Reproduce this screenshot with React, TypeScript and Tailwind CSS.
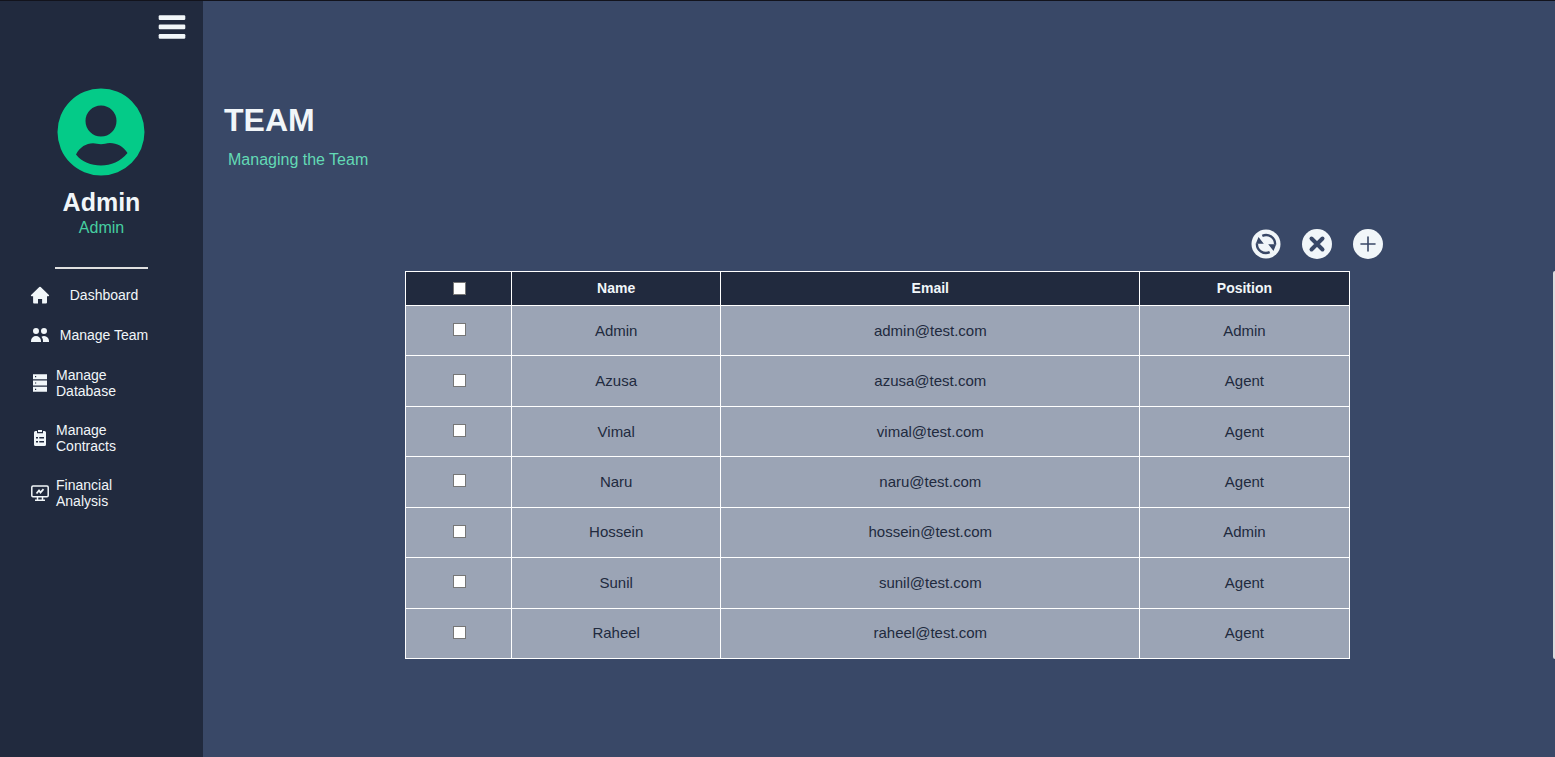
import React from "react";

type Member = { name: string; email: string; position: string };

const members: Member[] = [
  { name: "Admin", email: "admin@test.com", position: "Admin" },
  { name: "Azusa", email: "azusa@test.com", position: "Agent" },
  { name: "Vimal", email: "vimal@test.com", position: "Agent" },
  { name: "Naru", email: "naru@test.com", position: "Agent" },
  { name: "Hossein", email: "hossein@test.com", position: "Admin" },
  { name: "Sunil", email: "sunil@test.com", position: "Agent" },
  { name: "Raheel", email: "raheel@test.com", position: "Agent" },
];

function BarsIcon() {
  return (
    <svg width="28" height="26" viewBox="0 0 28 26" fill="currentColor" aria-hidden="true">
      <rect x=".7" y="1.200" width="26.600" height="4.800" rx="1.200" />
      <rect x=".7" y="10.500" width="26.600" height="4.800" rx="1.200" />
      <rect x=".7" y="20" width="26.600" height="4.800" rx="1.200" />
    </svg>
  );
}

function AvatarIcon() {
  return (
    <svg width="89" height="88" viewBox="0 0 89 88" aria-hidden="true">
      <path
        fill="#04cb88"
        fillRule="evenodd"
        d="M44 .5a43.5 43.5 0 1 0 0 87 43.5 43.5 0 0 0 0-87ZM44 17.500a15.500 15.500 0 1 1 0 31 15.500 15.500 0 0 1 0-31ZM19 66.500C23 59 29 55.500 36 55.300c3 0 5 1 8 1s5-1.300 9-1.300c7 0 13.500 3.500 17.500 10C63.500 73.500 54 77.500 44 77.500S25 74 19 66.500Z"
      />
    </svg>
  );
}

function HomeIcon() {
  return (
    <svg width="20" height="20" viewBox="0 0 20 20" fill="currentColor" aria-hidden="true">
      <path d="M9.300 2a1 1 0 0 1 1.400 0l8.200 8c.5.500.2 1.200-.5 1.200H17v6.300c0 .5-.4.900-.9.900h-4V14H8v4.400H4c-.5 0-.9-.4-.9-.9v-6.300H1.600c-.7 0-1-.7-.5-1.200z" />
    </svg>
  );
}

function UsersIcon() {
  return (
    <svg width="20" height="20" viewBox="0 0 20 20" fill="currentColor" aria-hidden="true">
      <path d="M9 6a3 3 0 1 1-6 0 3 3 0 0 1 6 0zM17 6a3 3 0 1 1-6 0 3 3 0 0 1 6 0zM12.930 17c.046-.327.070-.66.070-1a6.970 6.970 0 0 0-1.500-4.330A5 5 0 0 1 19 16v1h-6.070zM6 11a5 5 0 0 1 5 5v1H1v-1a5 5 0 0 1 5-5z" />
    </svg>
  );
}

function ServerIcon() {
  return (
    <svg width="20" height="20" viewBox="0 0 20 20" fill="currentColor" aria-hidden="true">
      <path
        fillRule="evenodd"
        d="M3 1.200h14v5H3zM5 3v1.200h1.200V3zM3 7.500h14v5H3zM5 9.400v1.200h1.200V9.400zM3 13.800h14v5H3zM5 15.700v1.200h1.200v-1.200z"
      />
    </svg>
  );
}

function ClipboardIcon() {
  return (
    <svg width="20" height="20" viewBox="0 0 20 20" fill="currentColor" aria-hidden="true">
      <path
        fillRule="evenodd"
        d="M5.500 3H7v2.200h6V3h1.500A1.500 1.500 0 0 1 16 4.500v12a1.500 1.500 0 0 1-1.500 1.500h-9A1.500 1.500 0 0 1 4 16.500v-12A1.500 1.500 0 0 1 5.500 3zM6 9v1.500h2V9zM9.300 9v1.500H14V9zM6 13v1.500h2V13zM9.300 13v1.500H14V13z"
      />
      <path d="M8 2h4v2H8z" />
    </svg>
  );
}

function AnalysisIcon() {
  return (
    <svg width="20" height="20" viewBox="0 0 20 20" fill="none" stroke="currentColor" strokeWidth="1.500" aria-hidden="true">
      <rect x="1.800" y="3" width="16.400" height="10.800" rx="1.200" />
      <path d="M7.500 14v3M12.500 14v3M5 17.300h10" />
      <path d="m6.500 10.500 2.500-3 1.500 2 3-3.300" strokeWidth="1.800" />
    </svg>
  );
}

function RefreshIcon() {
  return (
    <svg width="30" height="30" viewBox="0 0 30 30" aria-hidden="true">
      <circle cx="15" cy="15" r="14.500" fill="#f1f6f9" />
      <path
        d="M11.300 6.800A9.100 9.100 0 0 1 24.100 15.500M18.700 23.200A9.100 9.100 0 0 1 5.900 14.500"
        fill="none"
        stroke="#394867"
        strokeWidth="2.400"
      />
      <path d="M7.500 8 12.800 14.700H4.800zM17.200 15.300h8L22.500 22z" fill="#394867" />
    </svg>
  );
}

function CloseIcon() {
  return (
    <svg width="32" height="32" viewBox="0 0 32 32" aria-hidden="true">
      <circle cx="16" cy="16" r="15" fill="#f1f6f9" />
      <path d="m10.500 10.500 11 11m0-11-11 11" stroke="#394867" strokeWidth="4" strokeLinecap="round" />
    </svg>
  );
}

function PlusIcon() {
  return (
    <svg width="30" height="30" viewBox="0 0 30 30" aria-hidden="true">
      <circle cx="15" cy="15" r="15" fill="#f1f6f9" />
      <path d="M15 8v14M8 15h14" stroke="#394867" strokeWidth="1.600" strokeLinecap="round" />
    </svg>
  );
}

const links = [
  { label: "Dashboard", icon: <HomeIcon />, wraps: false },
  { label: "Manage Team", icon: <UsersIcon />, wraps: false },
  { label: "Manage Database", icon: <ServerIcon />, wraps: true },
  { label: "Manage Contracts", icon: <ClipboardIcon />, wraps: true },
  { label: "Financial Analysis", icon: <AnalysisIcon />, wraps: true },
];

const box =
  "m-0 block size-[13px] appearance-none border border-[#767676] bg-white checked:bg-[#04cb88]";

export default function App() {
  return (
    <div className="flex min-h-screen border-t border-[#12131c] bg-[#394867] font-['Liberation_Sans',Arial,sans-serif] text-[#f1f6f9]">
      <aside className="flex w-[203px] shrink-0 flex-col bg-[#212a3e]">
        <button type="button" aria-label="Toggle menu" className="mt-[13px] mr-[17px] self-end">
          <BarsIcon />
        </button>
        <div className="mt-12 flex flex-col items-center">
          <AvatarIcon />
          <h2 className="mt-3 text-[25px] leading-7 font-bold">Admin</h2>
          <p className="text-base leading-6 text-[#46cfa1]">Admin</p>
        </div>
        <hr className="mx-[55px] mt-[27px] border-t-2 border-[#e0e0e0]" />
        <nav className="mt-[6px] flex flex-col pl-[30px] text-sm leading-4">
          {links.map((link) => (
            <a
              key={link.label}
              href="#"
              className={link.wraps ? "flex h-[55px] items-center gap-[6px]" : "flex h-10 items-center"}
            >
              {link.icon}
              <span className={link.wraps ? "w-20" : "w-[108px] text-center"}>{link.label}</span>
            </a>
          ))}
        </nav>
      </aside>

      <main className="flex min-w-0 flex-1 flex-col">
        <header className="pt-[101px] pl-[21px]">
          <h1 className="text-[32px] leading-9 font-bold">TEAM</h1>
          <p className="mt-[10px] pl-1 text-base leading-6 text-[#63dab5]">Managing the Team</p>
        </header>
        <div className="mt-14 mr-[172px] flex items-center justify-end gap-5">
          <button type="button" aria-label="Refresh">
            <RefreshIcon />
          </button>
          <button type="button" aria-label="Delete selected">
            <CloseIcon />
          </button>
          <button type="button" aria-label="Add member">
            <PlusIcon />
          </button>
        </div>
        <div className="mt-[11px] flex">
          <div className="flex flex-1 justify-center pr-px">
            <table className="h-[388px] w-[70%] table-fixed border-collapse text-center">
              <colgroup>
                <col className="w-[11.2%]" />
                <col className="w-[22.2%]" />
                <col className="w-[44.4%]" />
                <col className="w-[22.2%]" />
              </colgroup>
              <thead className="bg-[#212a3e] text-sm leading-4">
                <tr className="h-[34px]">
                  <th className="border border-white p-0">
                    <div className="flex justify-center pl-[2px]">
                      <input type="checkbox" aria-label="Select all" className={box} />
                    </div>
                  </th>
                  <th className="border border-white p-0 pb-[2px]">Name</th>
                  <th className="border border-white p-0 pb-[2px]">Email</th>
                  <th className="border border-white p-0 pb-[2px]">Position</th>
                </tr>
              </thead>
              <tbody className="bg-[#9ba4b5] text-[15px] leading-5 text-[#212a3e]">
                {members.map((m) => (
                  <tr key={m.email}>
                    <td className="border border-white p-0">
                      <div className="flex justify-center pb-[2px] pl-[2px]">
                        <input type="checkbox" aria-label={`Select ${m.name}`} className={box} />
                      </div>
                    </td>
                    <td className="border border-white p-0">{m.name}</td>
                    <td className="border border-white p-0">{m.email}</td>
                    <td className="border border-white p-0">{m.position}</td>
                  </tr>
                ))}
              </tbody>
            </table>
          </div>
          <div className="w-[2px] rounded-l-sm bg-[#dcdcdc]" />
        </div>
      </main>
    </div>
  );
}
